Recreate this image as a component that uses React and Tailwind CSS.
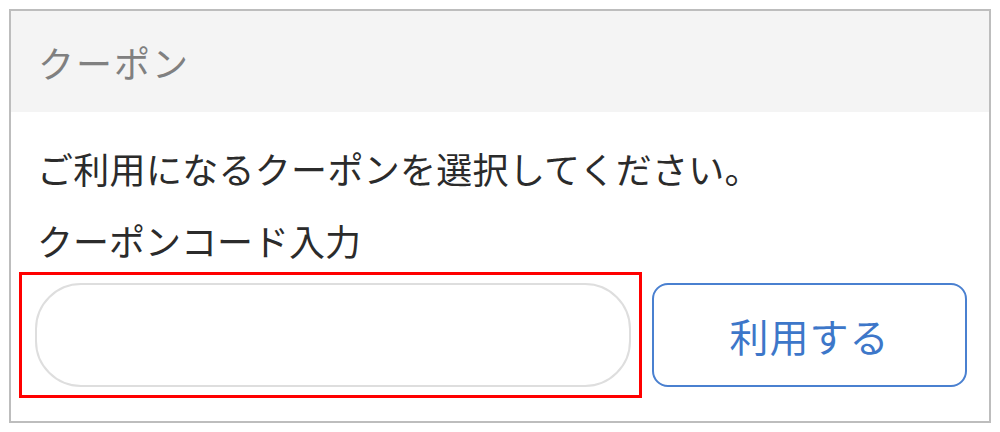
export default function App() {
  return (
    <div
      className="w-[1000px] h-[432px] bg-white pt-[9px] px-[9px]"
      style={{ fontFamily: '"Noto Sans CJK JP", "Noto Sans", sans-serif' }}
    >
      <div className="border-2 border-[#bdbdbd] bg-white">
        {/* header */}
        <div className="h-[101px] bg-[#f4f4f4] flex items-center pl-[27px]">
          <span className="text-[36px] leading-[52px] text-[#808080] tracking-[2px]">クーポン</span>
        </div>

        {/* body */}
        <div className="pt-[30px] pb-[23px]">
          <p className="pl-[26px] text-[36px] leading-[52px] text-[#2b2b2b] tracking-[0.3px]">
            ご利用になるクーポンを選択してください。
          </p>
          <p className="pl-[26px] mt-[20px] text-[36px] leading-[52px] text-[#2b2b2b]">
            クーポンコード入力
          </p>

          <div className="mt-[6px] flex items-center pl-[8px] pr-[22px] gap-[10px]">
            <div className="w-[623px] h-[126px] border-[3px] border-[#ff0000] pl-[13px] pr-[8px] py-[8px]">
              <input
                type="text"
                className="w-full h-full rounded-[46px] border-2 border-[#dedede] bg-white outline-none px-6 text-[32px]"
              />
            </div>
            <button className="flex-1 h-[104px] rounded-[16px] border-2 border-[#4a80d0] text-[#3d77c9] text-[39px] tracking-[1px] flex items-center justify-center">
              利用する
            </button>
          </div>
        </div>
      </div>
    </div>
  );
}
